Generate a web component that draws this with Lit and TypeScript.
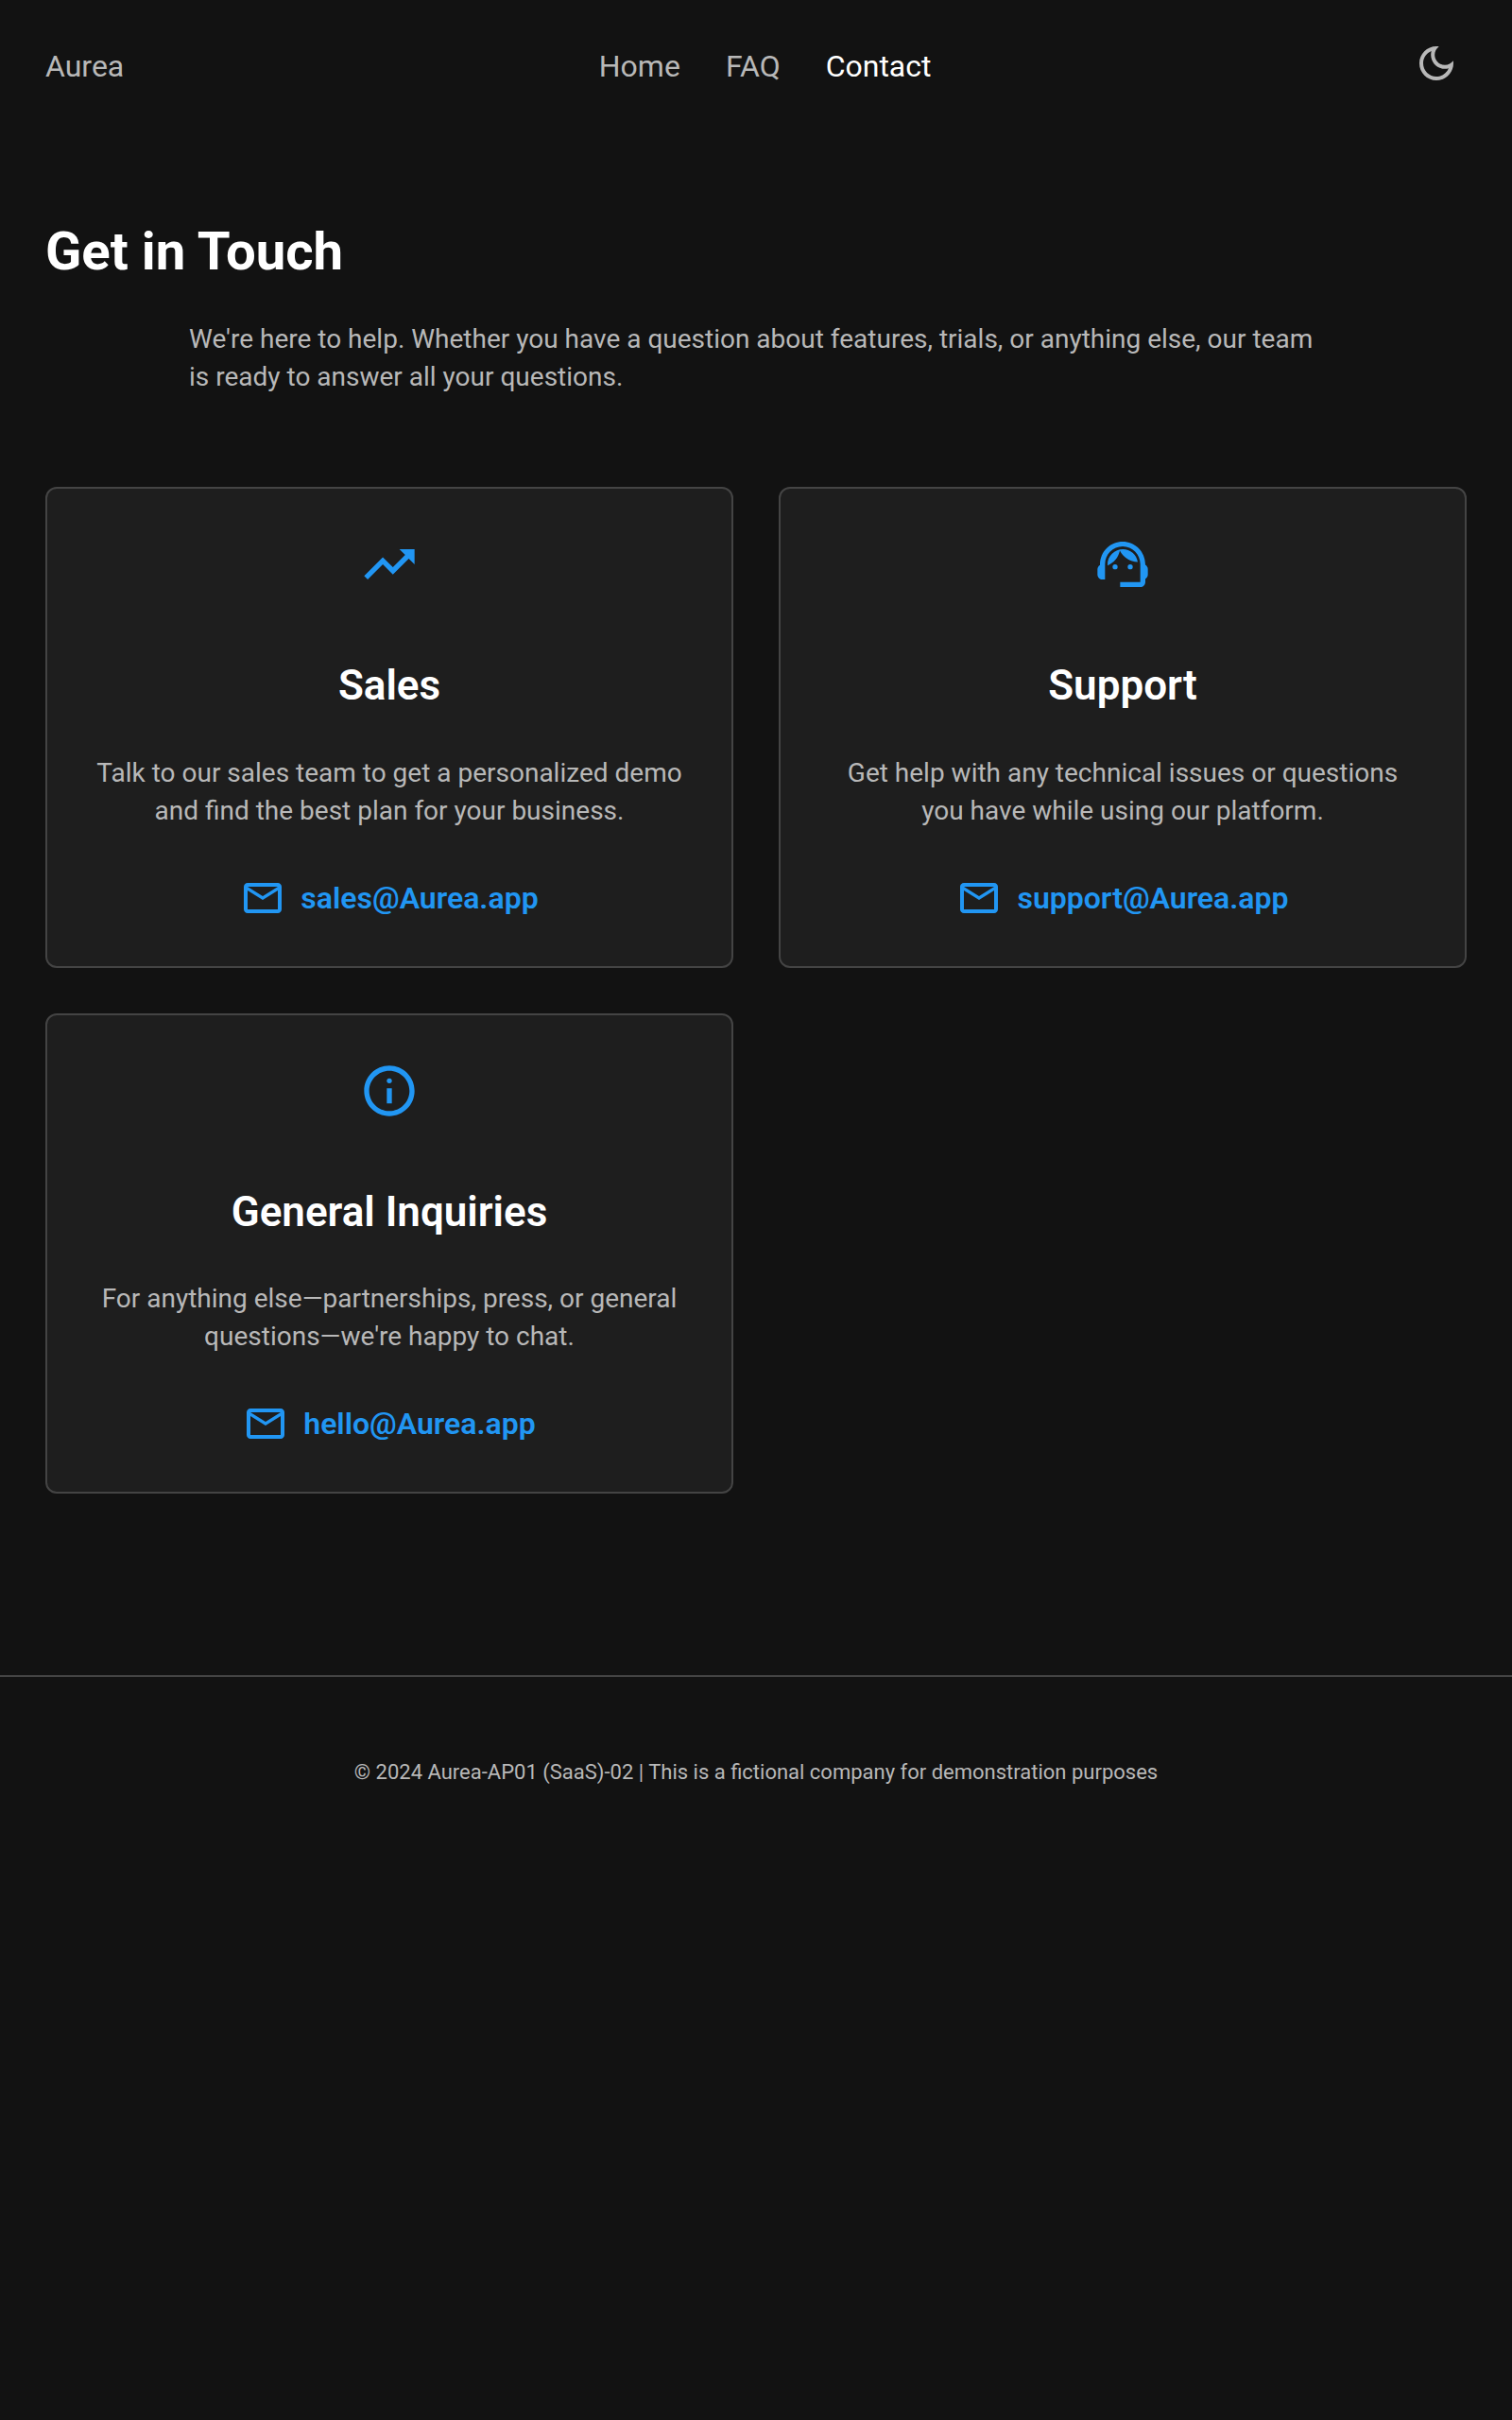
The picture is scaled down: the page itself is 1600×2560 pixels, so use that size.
import { LitElement, html, css, svg } from "lit";
import { customElement } from "lit/decorators.js";

const icon = (size: number, cls: string, body: unknown) =>
  html`<svg class=${cls} width=${size} height=${size} viewBox="0 0 24 24" fill="currentColor">${body}</svg>`;

const TREND = svg`<path d="M16 6l2.29 2.29-4.88 4.88-4-4L2 16.59 3.41 18l6-6 4 4 6.3-6.29L22 12V6z"/>`;
const AGENT = svg`<path d="M21 12.22C21 6.73 16.74 3 12 3c-4.69 0-9 3.65-9 9.28-.6.34-1 .98-1 1.72v2c0 1.1.9 2 2 2h1v-6.1c0-3.87 3.13-7 7-7s7 3.13 7 7V19h-8v2h8c1.1 0 2-.9 2-2v-1.22c.59-.31 1-.92 1-1.61v-2.3c0-.67-.41-1.28-1-1.65z"/><circle cx="9" cy="13" r="1"/><circle cx="15" cy="13" r="1"/><path d="M18 11.03C17.52 8.18 15.04 6 12.05 6c-3.03 0-6.29 2.51-6.03 6.45 2.47-1.01 4.33-3.21 4.86-5.89 1.31 2.63 4 4.44 7.12 4.47z"/>`;
const INFO = svg`<circle cx="12" cy="8" r="1"/><path d="M11 11h2v6h-2zm1-9C6.48 2 2 6.48 2 12s4.48 10 10 10 10-4.48 10-10S17.52 2 12 2zm0 18c-4.41 0-8-3.59-8-8s3.59-8 8-8 8 3.59 8 8-3.59 8-8 8z"/>`;
const MAIL = svg`<path d="M22 6c0-1.1-.9-2-2-2H4c-1.1 0-2 .9-2 2v12c0 1.1.9 2 2 2h16c1.1 0 2-.9 2-2V6zm-2 0l-8 5-8-5h16zm0 12H4V8l8 5 8-5v10z"/>`;
const MOON = svg`<path d="M9.37 5.51c-.18.64-.27 1.31-.27 1.99 0 4.08 3.32 7.4 7.4 7.4.68 0 1.35-.09 1.99-.27C17.45 17.19 14.93 19 12 19c-3.86 0-7-3.14-7-7 0-2.93 1.81-5.45 4.37-6.49zM12 3c-4.97 0-9 4.03-9 9s4.03 9 9 9 9-4.03 9-9c0-.46-.04-.92-.1-1.36-.98 1.37-2.58 2.26-4.4 2.26-2.98 0-5.4-2.42-5.4-5.4 0-1.81.89-3.42 2.26-4.4-.44-.06-.9-.1-1.36-.1z"/>`;

const CARDS = [
  { icon: TREND, title: "Sales", text: "Talk to our sales team to get a personalized demo and find the best plan for your business.", mail: "sales@Aurea.app" },
  { icon: AGENT, title: "Support", text: "Get help with any technical issues or questions you have while using our platform.", mail: "support@Aurea.app" },
  { icon: INFO, title: "General Inquiries", text: "For anything else—partnerships, press, or general questions—we're happy to chat.", mail: "hello@Aurea.app" },
];

@customElement("app-root")
export class AppRoot extends LitElement {
  static styles = css`
    :host { display: block; min-height: 2560px; background: #121212; color: #b8b8b8; font-family: Roboto, "Liberation Sans", sans-serif; }
    .top { display: flex; justify-content: space-between; align-items: center; padding: 32px 48px 0; height: 76px; }
    .brand { font-size: 32px; line-height: 48px; }
    .nav { display: flex; gap: 48px; font-size: 32px; line-height: 48px; }
    .nav .on { color: #fff; }
    .toggle { display: flex; padding: 8px; margin: -6px 0 0; color: #b8b8b8; }
    main { padding: 125px 48px 0; }
    h1 { margin: 0; font-size: 56.3px; line-height: 67px; font-weight: 700; color: #fff; }
    .lead { margin: 39px auto 0; width: 1200px; font-size: 28px; line-height: 40px; }
    .grid { display: grid; grid-template-columns: 1fr 1fr; gap: 48px; margin-top: 96px; }
    .card { box-sizing: border-box; padding: 48px; background: #1e1e1e; border: 2px solid #444444; border-radius: 12px; display: flex; flex-direction: column; align-items: center; text-align: center; }
    .card .ic { color: #2196f3; display: block; }
    h2 { margin: 64px 0 0; font-size: 44px; line-height: 64.5px; font-weight: 600; color: #fff; }
    .card p { margin: 40px 0 0; font-size: 28px; line-height: 40px; }
    .mail { margin-top: 48px; display: flex; align-items: center; gap: 16px; color: #2196f3; font-size: 32px; font-weight: 600; line-height: 48px; }
    footer { margin-top: 192px; border-top: 2px solid #444444; padding-top: 85px; text-align: center; font-size: 22px; line-height: 32px; }
  `;

  render() {
    return html`
      <header class="top">
        <div class="brand">Aurea</div>
        <nav class="nav"><span>Home</span><span>FAQ</span><span class="on">Contact</span></nav>
        <div class="toggle">${icon(48, "", MOON)}</div>
      </header>
      <main>
        <h1>Get in Touch</h1>
        <div class="lead">We're here to help. Whether you have a question about features, trials, or anything else, our team is ready to answer all your questions.</div>
        <div class="grid">
          ${CARDS.map(
            (c) => html`<div class="card">
              ${icon(64, "ic", c.icon)}
              <h2>${c.title}</h2>
              <p>${c.text}</p>
              <div class="mail">${icon(48, "", MAIL)}<span>${c.mail}</span></div>
            </div>`
          )}
        </div>
      </main>
      <footer>© 2024 Aurea-AP01 (SaaS)-02 | This is a fictional company for demonstration purposes</footer>
    `;
  }
}
